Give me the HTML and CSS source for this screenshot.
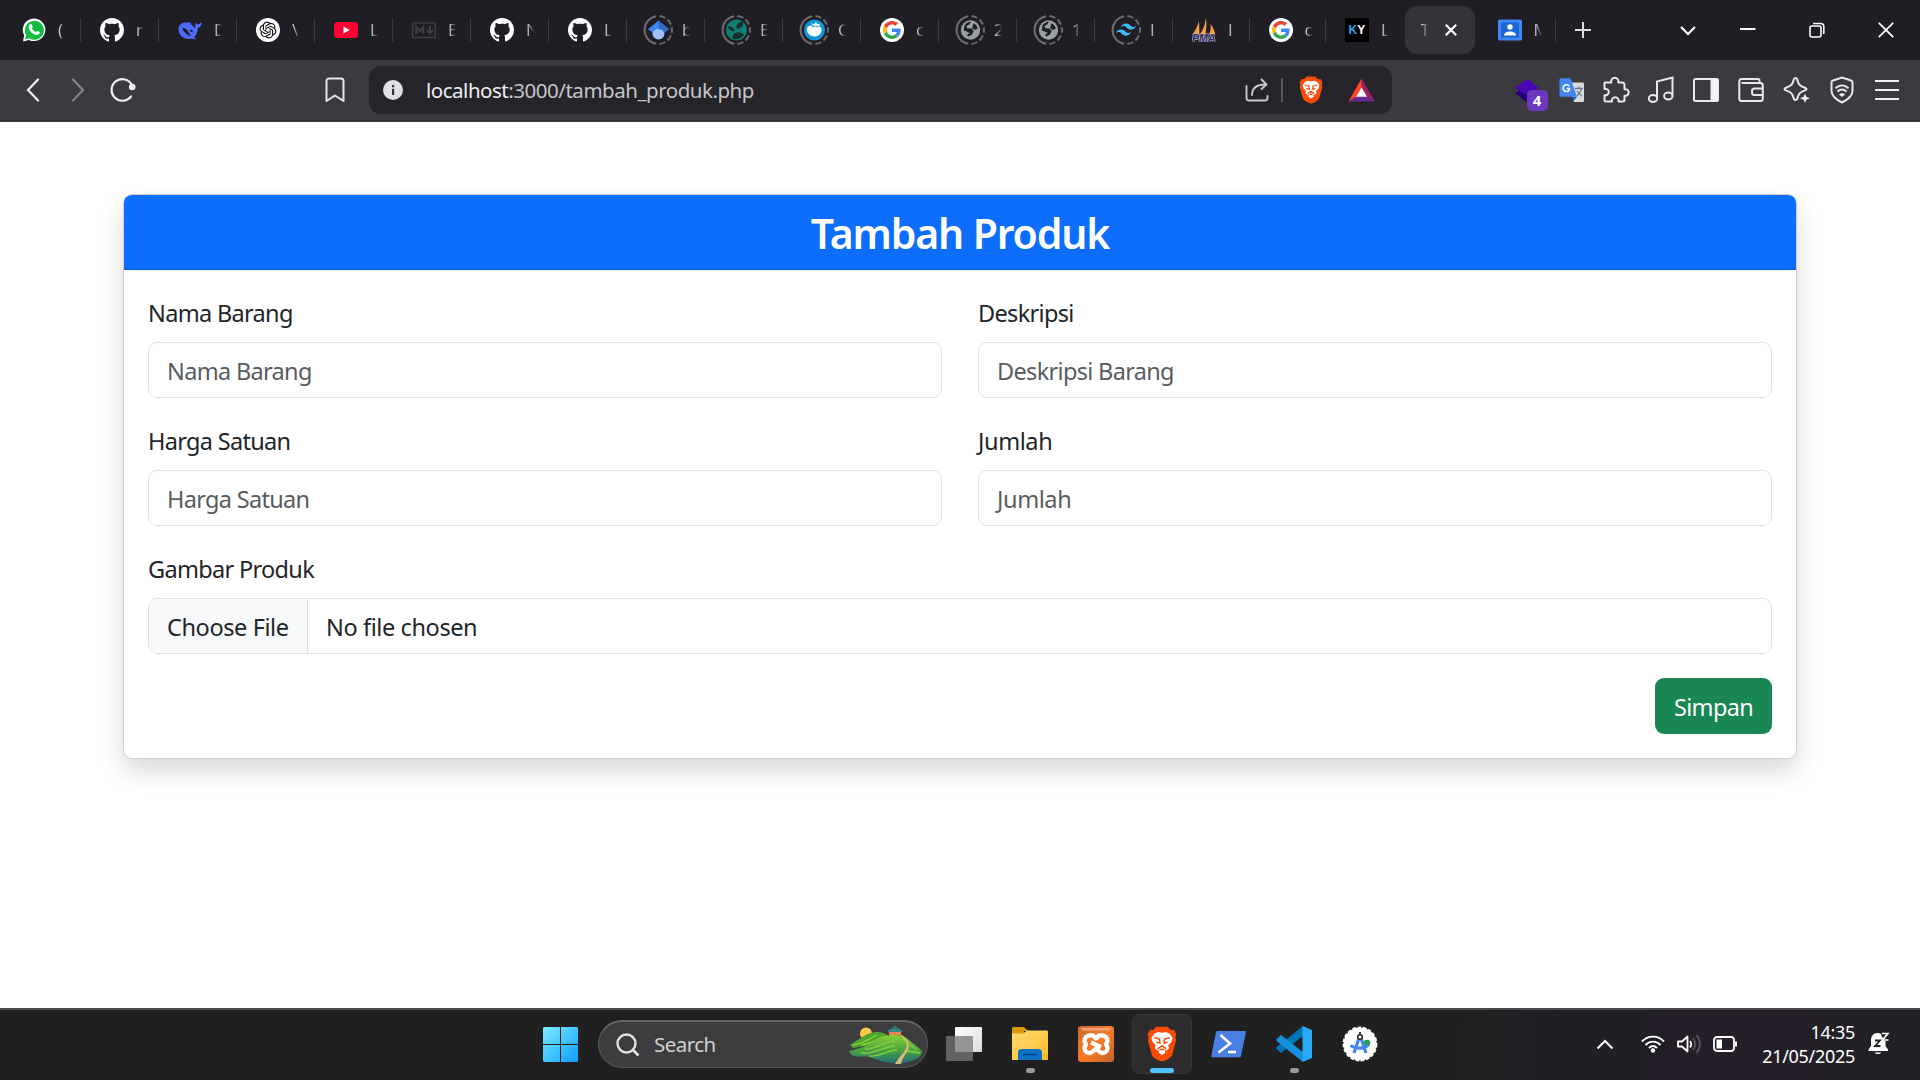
FILE: index.html
```html
<!DOCTYPE html>
<html lang="id">
<head>
<meta charset="utf-8">
<title>Tambah Produk</title>
<link rel="stylesheet" href="styles.css">
</head>
<body>
<svg class="defs" width="0" height="0" aria-hidden="true">
  <defs>
    <symbol id="github" viewBox="0 0 16 16"><path fill="#fff" d="M8 0C3.58 0 0 3.58 0 8c0 3.54 2.29 6.53 5.47 7.59.4.07.55-.17.55-.38 0-.19-.01-.82-.01-1.49-2.01.37-2.53-.49-2.69-.94-.09-.23-.48-.94-.82-1.13-.28-.15-.68-.52-.01-.53.63-.01 1.08.58 1.23.82.72 1.21 1.87.87 2.33.66.07-.52.28-.87.51-1.07-1.78-.2-3.64-.89-3.64-3.95 0-.87.31-1.59.82-2.15-.08-.2-.36-1.02.08-2.12 0 0 .67-.21 2.2.82.64-.18 1.32-.27 2-.27s1.36.09 2 .27c1.53-1.04 2.2-.82 2.2-.82.44 1.1.16 1.92.08 2.12.51.56.82 1.27.82 2.15 0 3.07-1.87 3.75-3.65 3.95.29.25.54.73.54 1.48 0 1.07-.01 1.93-.01 2.2 0 .21.15.46.55.38A8.01 8.01 0 0 0 16 8c0-4.42-3.58-8-8-8"/></symbol>
    <symbol id="google" viewBox="0 0 24 24"><circle cx="12" cy="12" r="12" fill="#fff"/><g transform="translate(3 3) scale(.375)"><path fill="#EA4335" d="M24 9.5c3.54 0 6.71 1.22 9.21 3.6l6.85-6.85C35.9 2.38 30.47 0 24 0 14.62 0 6.51 5.38 2.56 13.22l7.98 6.19C12.43 13.72 17.74 9.5 24 9.5z"/><path fill="#4285F4" d="M46.98 24.55c0-1.57-.15-3.09-.38-4.55H24v9.02h12.94c-.58 2.96-2.26 5.48-4.78 7.18l7.73 6c4.51-4.18 7.09-10.36 7.09-17.65z"/><path fill="#FBBC05" d="M10.53 28.59c-.48-1.45-.76-2.99-.76-4.59s.27-3.14.76-4.59l-7.98-6.19C.92 16.46 0 20.12 0 24c0 3.88.92 7.54 2.56 10.78l7.97-6.19z"/><path fill="#34A853" d="M24 48c6.48 0 11.93-2.13 15.89-5.81l-7.73-6c-2.15 1.45-4.92 2.3-8.16 2.3-6.26 0-11.57-4.22-13.47-9.91l-7.98 6.19C6.51 42.62 14.62 48 24 48z"/></g></symbol>
    <symbol id="ring" viewBox="0 0 30 30"><g fill="none" stroke="#6b6b70" stroke-width="2"><path d="M13.2 1.2A14 14 0 0 0 13.2 28.8"/><path d="M16.5 1.1A14 14 0 0 1 22.3 3"/><path d="M24.4 4.6A14 14 0 0 1 27.9 9.6"/><path d="M28.7 12.2A14 14 0 0 1 28.7 17.8"/><path d="M27.9 20.4A14 14 0 0 1 24.4 25.4"/><path d="M22.3 27A14 14 0 0 1 16.5 28.9"/></g></symbol>
    <symbol id="globe" viewBox="0 0 30 30"><use href="#ring"/><circle cx="15.5" cy="15" r="9.7" fill="#9aa0a6"/><path d="M9.500 10.500c1.500-2.500 4-4 6.500-3.800l-1.500 2.500-3 1.800.5 2.200 4.500.3 2.200 2.500-1.700 3.500-3.500 2-1.800-1.200 3-2.300-3.500-1.800-2.500-.7zM18.500 8.200c2.500 1 3.800 3 4.200 5.300l-2.500 1.500-3-1.500.5-2.500z" fill="#1f1e24"/></symbol>
    <symbol id="brave" viewBox="0 0 24 28"><path fill="#fb4b08" d="M7.500.500h9L19 3.200l2.500-.2 2 3.500-.8 2.200.6 2.300-3.200 11.500c-.8 2.200-5 4.200-8.100 5-3.100-.8-7.300-2.800-8.100-5L.7 11l.6-2.300L.5 6.500 2.500 3l2.500.2z"/><path fill="#fff" d="M12 5.200l3.200-.5 3 1.300 2.300 3.300-1 3.200-2.600 2.600.8 2.200-2.400 2-1.300-1.200.8 2.500L12 22.500l-2.800-1.900.8-2.500-1.300 1.200-2.400-2 .8-2.200-2.600-2.600-1-3.200L5.800 6l3-1.300z"/><path d="M5.800 9l4.200 1.200.4 3-2.900-.6M18.200 9L14 10.200l-.4 3 2.900-.6M8.600 17.700L12 15.300l3.400 2.400M10.300 18.300h3.400" fill="none" stroke="#fb4b08" stroke-width="1.200"/></symbol>
    <linearGradient id="win" x1="0" y1="0" x2="1" y2="1"><stop offset="0" stop-color="#7cecff"/><stop offset="1" stop-color="#0c9dff"/></linearGradient>
    <linearGradient id="folder" x1="0" y1="0" x2="1" y2="1"><stop offset="0" stop-color="#ffda72"/><stop offset="1" stop-color="#fdbd2c"/></linearGradient>
    <linearGradient id="hill" x1="0" y1="0" x2="0" y2="1"><stop offset="0" stop-color="#8bd038"/><stop offset=".55" stop-color="#48a23f"/><stop offset="1" stop-color="#23707a"/></linearGradient>
    <linearGradient id="sheet" x1="0" y1="0" x2="1" y2="1"><stop offset="0" stop-color="#fff"/><stop offset="1" stop-color="#dcdcdc"/></linearGradient>
    <linearGradient id="xampp" x1="0" y1="0" x2="1" y2="1"><stop offset="0" stop-color="#c86a2c"/><stop offset=".5" stop-color="#fb7a24"/><stop offset="1" stop-color="#c0652d"/></linearGradient>
  </defs>
</svg>

<header class="tabs">
  <div class="tab"><svg class="fav" viewBox="0 0 24 24"><path d="M1 23.500l1.200-6.200A11.300 11.300 0 1 1 7 21.900z" fill="#fff"/><path d="M3 21.500l1.200-4.400A9.500 9.500 0 1 1 7.300 20.300z" fill="#0fbd41"/><path d="M8.300 6.200c.6-.4 1.200-.1 1.500.5l.9 2c.2.500-.8 1.500-.7 1.900.7 1.600 2 2.700 3.600 3.400.5.100 1.300-1.300 1.800-1.100l2.300 1.200c.5 1.600-1.300 2.900-2.800 2.800-3.900-.3-8-4.200-8.200-7.500-.1-1.300.7-2.500 1.600-3.200z" fill="#fff"/></svg><span class="name">(</span></div>
  <div class="tab"><svg class="fav"><use href="#github"/></svg><span class="name">r</span></div>
  <div class="tab"><svg class="fav" viewBox="0 0 24 24"><path fill="#4d6bfe" d="M.5 10.500C1 6.500 4.500 4 8.500 4.700c1.500.1 2.500-.7 3.600-.3.800.4.300 1.200 1 2 1.500 1.200 3.200 3 3.700 3.600 1-.6.200-2.800.6-5.500.7 1.300 1.500 1.900 2.700 1.800 1.300-.1 2-1.500 3.700-1.700-.2 3.200-1.700 5-4 5.500-.1 4-1.500 7.200-3.700 9.100 1 .7 2 .8 1.700 1.500-.8.8-2.600.4-3.700-.3C8 22.500.2 18.500.5 10.500zM4.500 10c-.5 2 4.800 8 8.500 8.200-.8-1.400-2.300-3.700-3-5-1-2-3.200-3.600-5.500-3.200zM12.300 11.500c-.6 1.200 1 3 2.500 2.700.5-1.200-1.300-3-2.500-2.700z"/></svg><span class="name">D</span></div>
  <div class="tab"><svg class="fav" viewBox="0 0 24 24"><circle cx="12" cy="12" r="12" fill="#fff"/><g transform="translate(3.600 3.600) scale(.7)"><path fill="#111" d="M22.2819 9.8211a5.9847 5.9847 0 0 0-.5157-4.9108 6.0462 6.0462 0 0 0-6.5098-2.9A6.0651 6.0651 0 0 0 4.9807 4.1818a5.9847 5.9847 0 0 0-3.9977 2.9 6.0462 6.0462 0 0 0 .7427 7.0966 5.98 5.98 0 0 0 .511 4.9107 6.051 6.051 0 0 0 6.5146 2.9001A5.9847 5.9847 0 0 0 13.2599 24a6.0557 6.0557 0 0 0 5.7718-4.2058 5.9894 5.9894 0 0 0 3.9977-2.9001 6.0557 6.0557 0 0 0-.7475-7.0729zm-9.022 12.6081a4.4755 4.4755 0 0 1-2.8764-1.0408l.1419-.0804 4.7783-2.7582a.7948.7948 0 0 0 .3927-.6813v-6.7369l2.02 1.1686a.071.071 0 0 1 .038.052v5.5826a4.504 4.504 0 0 1-4.4945 4.4944zm-9.6607-4.1254a4.4708 4.4708 0 0 1-.5346-3.0137l.142.0852 4.783 2.7582a.7712.7712 0 0 0 .7806 0l5.8428-3.3685v2.3324a.0804.0804 0 0 1-.0332.0615L9.74 19.9502a4.4992 4.4992 0 0 1-6.1408-1.6464zM2.3408 7.8956a4.485 4.485 0 0 1 2.3655-1.9728V11.6a.7664.7664 0 0 0 .3879.6765l5.8144 3.3543-2.0201 1.1685a.0757.0757 0 0 1-.071 0l-4.8303-2.7865A4.504 4.504 0 0 1 2.3408 7.872zm16.5963 3.8558L13.1038 8.364 15.1192 7.2a.0757.0757 0 0 1 .071 0l4.8303 2.7913a4.4944 4.4944 0 0 1-.6765 8.1042v-5.6772a.79.79 0 0 0-.407-.667zm2.0107-3.0231l-.142-.0852-4.7735-2.7818a.7759.7759 0 0 0-.7854 0L9.409 9.2297V6.8974a.0662.0662 0 0 1 .0284-.0615l4.8303-2.7866a4.4992 4.4992 0 0 1 6.6802 4.66zM8.3065 12.863l-2.02-1.1638a.0804.0804 0 0 1-.038-.0567V6.0742a4.4992 4.4992 0 0 1 7.3757-3.4537l-.142.0805L8.704 5.459a.7948.7948 0 0 0-.3927.6813zm1.0976-2.3654l2.602-1.4998 2.6069 1.4998v2.9994l-2.5974 1.4997-2.6067-1.4997Z"/></g></svg><span class="name">\</span></div>
  <div class="tab"><svg class="fav" viewBox="0 0 24 24"><rect y="4" width="24" height="16" rx="3.500" fill="#ff0033"/><path d="M9.500 8.500v7l6.200-3.500z" fill="#fff"/></svg><span class="name">L</span></div>
  <div class="tab"><svg class="fav" viewBox="0 0 24 24"><g fill="none" stroke="#3f3f43"><rect x=".7" y="5" width="22.600" height="14.500" stroke-width="1.400"/><path d="M4.200 16V9l3.500 4 3.500-4v7" stroke-width="2"/><path d="M18 8v7m-3-3l3 3.500 3-3.500" stroke-width="2"/></g></svg><span class="name">E</span></div>
  <div class="tab"><svg class="fav"><use href="#github"/></svg><span class="name">N</span></div>
  <div class="tab"><svg class="fav"><use href="#github"/></svg><span class="name">L</span></div>
  <div class="tab"><svg class="fav ringed" viewBox="0 0 30 30"><use href="#ring"/><circle cx="15.500" cy="18.500" r="6" fill="#a0c3ff"/><path d="M15.500 5.500L5 14.200l4.800 3.500c1-2.400 3-3.700 5.700-3.700s4.700 1.300 5.700 3.700l4.800-3.500z" fill="#4285f4"/><path d="M15.500 5.500V14c2.700 0 4.700 1.300 5.700 3.700l4.800-3.500z" fill="#356ac3"/></svg><span class="name">b</span></div>
  <div class="tab"><svg class="fav ringed" viewBox="0 0 30 30"><use href="#ring"/><circle cx="15.500" cy="15" r="10.500" fill="#0a8172"/><path d="M7 11.500c3.500-.5 6 1 7 4.500-3.500.8-6.500-.8-7-4.500zM15.500 13.500c-.5-4 2-6.800 6.500-7 .8 4.200-2 7.500-6.500 7zM12 24c-1.500-3.500 1-6.500 4.500-6.800 3-.2 5 .8 6.500 2.800-3 3.500-7 5-11 4z" fill="#1f2a2b"/></svg><span class="name">E</span></div>
  <div class="tab"><svg class="fav ringed" viewBox="0 0 30 30"><use href="#ring"/><circle cx="15.500" cy="15" r="10.500" fill="#0c96dc"/><path d="M8.500 12c1.500-1.500 4-1.500 6-.7L12 8.500l3.500.5 1.500-2.500 1 2.500 3.500-.3-2 2.500c2 0 3 1.500 3 3.800 0 4-3 6.500-7 6.500s-7.500-3-7.500-6.500c0-1.200 0-2 .5-3z" fill="#fff"/><path d="M13 12l3.500-1 3 1" stroke="#0c96dc" fill="none"/></svg><span class="name">C</span></div>
  <div class="tab"><svg class="fav"><use href="#google"/></svg><span class="name">c</span></div>
  <div class="tab"><svg class="fav ringed"><use href="#globe"/></svg><span class="name">2</span></div>
  <div class="tab"><svg class="fav ringed"><use href="#globe"/></svg><span class="name">1</span></div>
  <div class="tab"><svg class="fav ringed" viewBox="0 0 30 30"><use href="#ring"/><g transform="translate(5 4.500) scale(.84)"><path fill="#38bdf8" d="M12.001 4.800c-3.200 0-5.200 1.600-6 4.800 1.200-1.600 2.600-2.200 4.200-1.800.913.228 1.565.89 2.288 1.624C13.666 10.618 15.027 12 18.001 12c3.200 0 5.200-1.600 6-4.800-1.200 1.600-2.600 2.200-4.200 1.800-.913-.228-1.565-.89-2.288-1.624C16.337 6.182 14.976 4.800 12.001 4.800zm-6 7.200c-3.200 0-5.200 1.600-6 4.800 1.200-1.600 2.600-2.200 4.200-1.800.913.228 1.565.89 2.288 1.624 1.177 1.194 2.538 2.576 5.512 2.576 3.200 0 5.200-1.600 6-4.800-1.200 1.600-2.600 2.200-4.200 1.800-.913-.228-1.565-.89-2.288-1.624C10.337 13.382 8.976 12 6.001 12z"/></g></svg><span class="name">I</span></div>
  <div class="tab slim"><svg class="fav" viewBox="0 0 24 24"><path d="M7 3l.5 13.500H.5C3.500 12 5.800 8 7 3zM14 0c1 6 0 11-.5 16.500H8C11.500 11 13.200 6 14 0zM18.500 6c2.500 3 4 6.500 4.700 10.500H17c1.700-3.500 2-7 1.500-10.500z" fill="#f9a040"/><text x="0" y="23.500" class="pma">PMA</text></svg><span class="name">I</span></div>
  <div class="tab slim"><svg class="fav"><use href="#google"/></svg><span class="name">c</span></div>
  <div class="tab slim last"><svg class="fav" viewBox="0 0 24 24"><path d="M0 0h24v24H0z"/><text x="3.500" y="16" class="ky"><tspan fill="#2ba4e8">K</tspan><tspan fill="#fff">Y</tspan></text></svg><span class="name">L</span></div>
  <div class="tab active"><span class="name">T</span><svg width="12" height="12" viewBox="0 0 12 12"><path d="M.8.8l10.400 10.400M11.200.8L.8 11.200" stroke="#fff" stroke-width="2.200"/></svg></div>
  <div class="tab contacts"><svg class="fav" viewBox="0 0 24 24"><rect y="1.500" width="24" height="21" rx="1.500" fill="#4285f4"/><path d="M3 4.500h18v15H3z" fill="#1967d2"/><circle cx="12" cy="9" r="2.700" fill="#fff"/><path d="M6 17.500c0-5.500 12-5.500 12 0z" fill="#fff"/></svg><span class="name">M</span></div>
  <svg class="plus" width="16" height="16" viewBox="0 0 16 16"><path d="M8 0v16M0 8h16" stroke="#dcdcde" stroke-width="2"/></svg>
  <div class="window">
    <svg width="16" height="16" viewBox="0 0 16 16"><path d="M1 5l7 7 7-7" fill="none" stroke="#fff" stroke-width="2"/></svg>
    <svg width="16" height="16" viewBox="0 0 16 16"><path d="M0 7h15.500" stroke="#fff" stroke-width="2"/></svg>
    <svg width="16" height="16" viewBox="0 0 16 16"><g fill="none" stroke="#fff" stroke-width="1.600"><rect x="1" y="4" width="11" height="11" rx="2"/><path d="M4 1.500h7.500a3.300 3.300 0 0 1 3.300 3.300V12"/></g></svg>
    <svg width="16" height="16" viewBox="0 0 16 16"><path d="M.8.8l14.400 14.400M15.200.8L.8 15.200" stroke="#fff" stroke-width="1.800"/></svg>
  </div>
</header>

<nav class="toolbar">
  <div class="nav">
    <svg width="14" height="24" viewBox="0 0 14 24"><path d="M12 1.500L2 12l10 10.500" fill="none" stroke="#f0f0f2" stroke-width="2.200" stroke-linecap="round"/></svg>
    <svg width="14" height="24" viewBox="0 0 14 24"><path d="M2 1.500L12 12 2 22.500" fill="none" stroke="#85858a" stroke-width="2.200" stroke-linecap="round"/></svg>
    <svg width="26" height="26" viewBox="0 0 26 26"><path d="M22 8A10.800 10.800 0 1 0 21 19.500" fill="none" stroke="#f0f0f2" stroke-width="2.200" stroke-linecap="round"/><circle cx="22.200" cy="10" r="3.300" fill="#f0f0f2"/></svg>
  </div>
  <svg class="bookmark" width="20" height="26" viewBox="0 0 20 26"><path d="M1.500 4a2.500 2.500 0 0 1 2.500-2.500h12A2.500 2.500 0 0 1 18.500 4v20L10 18.500 1.500 24z" fill="none" stroke="#e8e8ea" stroke-width="2" stroke-linejoin="round"/></svg>
  <div class="address">
    <svg width="20" height="20" viewBox="0 0 20 20"><circle cx="10" cy="10" r="10" fill="#e1e0e6"/><path d="M9 5h2.200v2.200H9zM9 8.700h2.200V15H9z" fill="#333238"/></svg>
    <span class="url"><b>localhost</b>:3000/tambah_produk.php</span>
    <svg class="share" width="24" height="24" viewBox="0 0 24 24"><path d="M1.500 8v12a2.500 2.500 0 0 0 2.500 2.500h16a2.500 2.500 0 0 0 2.500-2.500v-2M7 17C7 10.500 11.500 6.500 21 6.500M16.500 1.500l5 5-5 4.500" fill="none" stroke="#c9c8ce" stroke-width="1.900" stroke-linecap="round" stroke-linejoin="round"/></svg>
    <i class="rule"></i>
    <svg class="lion" width="24" height="28"><use href="#brave"/></svg>
    <svg width="28" height="24" viewBox="0 0 28 24"><path d="M13.500.500L.5 23.500l8.500-5 5-9z" fill="#ff4724"/><path d="M13.500.500l13.500 23-8.500-5-5-9z" fill="#9e1f63"/><path d="M.5 23.500h26.500l-8-5H8.500z" fill="#662d91"/><path d="M13.600 9.500l5.500 9.200h-11z" fill="#fff"/></svg>
  </div>
  <div class="extensions">
    <div class="ext"><svg width="26" height="24" viewBox="0 0 26 24"><path d="M1 15l12-7 12 7-13 9z" fill="#21007a"/><path d="M1 10L13 1l12 9-12 7z" fill="#4b06b5"/></svg><span class="badge">4</span></div>
    <svg width="26" height="24" viewBox="0 0 26 24"><path d="M11 4.500h13a1 1 0 0 1 1 1V23a1 1 0 0 1-1 1H15z" fill="#dadada"/><path d="M2 .300h9.500l6.500 18.500H2A1.500 1.500 0 0 1 .5 17.500v-16A1.500 1.500 0 0 1 2 .300z" fill="#4285f4"/><path d="M13 19h5l-4.500 5z" fill="#2456b8"/><path d="M10.200 8A3.400 3.400 0 1 0 10.300 12c.3-.6.300-1 .3-1.600H7.500" fill="none" stroke="#fff" stroke-width="1.500"/><path d="M16 10.500h8M20 8.500v2m2.700 0c-.7 3-2.500 5.500-5 7.500m.3-5c1 2 2.500 3.700 5 5" fill="none" stroke="#697f8b" stroke-width="1.300"/></svg>
    <svg width="28" height="28" viewBox="0 0 28 28"><path d="M3 6.500h6.300c-.8-2.300 1-4.800 3.500-4.800s4.300 2.500 3.500 4.800H20a2.500 2.500 0 0 1 2.500 2.500v4.300c2-.6 4.200.9 4.200 3.200s-2.200 3.800-4.200 3.200V24a1.500 1.500 0 0 1-1.500 1.500h-4.500c.6-2.300-1-4.300-3.200-4.300S9.500 23.200 10 25.500H4A1.500 1.500 0 0 1 2.500 24v-4.800c2.200.5 4.300-.9 4.300-3.200S4.700 12.500 2.500 13V7z" fill="none" stroke="#e8e8ea" stroke-width="2" stroke-linejoin="round"/></svg>
    <svg width="28" height="28" viewBox="0 0 28 28"><path d="M10 22.500V5.500l15.500-4v18" fill="none" stroke="#e8e8ea" stroke-width="2"/><ellipse cx="6" cy="22.500" rx="4.200" ry="3.400" fill="none" stroke="#e8e8ea" stroke-width="2"/><ellipse cx="21.300" cy="20" rx="4.200" ry="3.400" fill="none" stroke="#e8e8ea" stroke-width="2"/></svg>
    <svg width="28" height="28" viewBox="0 0 28 28"><rect x="2" y="3" width="24" height="22" rx="1.500" fill="none" stroke="#e8e8ea" stroke-width="2"/><path d="M18.500 2.500H26v23h-7.500z" fill="#f4f4f5"/></svg>
    <svg width="28" height="28" viewBox="0 0 28 28"><path d="M22.500 7V4.500a1.500 1.500 0 0 0-1.500-1.500H4.500a2.200 2.200 0 0 0-2.200 2.500v17a2.500 2.500 0 0 0 2.500 2.500h18.500a2.500 2.500 0 0 0 2.500-2.500V9.500A2.500 2.500 0 0 0 23.300 7H4.500M26 12.500h-8.500a2.500 2.500 0 0 0-2.500 2.500v1.500a2.500 2.500 0 0 0 2.500 2.500H26" fill="none" stroke="#e8e8ea" stroke-width="2"/></svg>
    <svg width="28" height="28" viewBox="0 0 28 28"><path d="M12.500 2c1 0 1.500.6 1.800 1.500 1 4.500 2 6.500 7.700 8.200 2 .6 2 2.100 0 2.700-5.200 1.500-6.600 3.500-7.700 8.200-.5 2-3 2-3.500 0-1.200-4.700-2.500-6.700-7.800-8.200-2-.6-2-2.100 0-2.700 5.600-1.700 6.700-3.700 7.800-8.200.3-.9.700-1.500 1.700-1.500z" fill="none" stroke="#e8e8ea" stroke-width="2"/><path d="M22 17.500l1.300 3.200 3.700 1.500-3.700 1.500-1.300 3.300-1.300-3.300-3.700-1.500 3.700-1.500z" fill="#f4f4f5"/></svg>
    <svg width="28" height="28" viewBox="0 0 28 28"><path d="M14 1.500l9 3a2 2 0 0 1 1.500 2V15c0 5-5.500 9-10.500 11.500C9 24 3.500 20 3.500 15V6.500a2 2 0 0 1 1.500-2zM7.500 12.200c4-3.600 9-3.600 13 0M9.500 15.500c2.800-2.500 6.200-2.500 9 0" fill="none" stroke="#e8e8ea" stroke-width="2"/><path d="M11 18.500c2-1.600 4-1.600 6 0l-3 2.500z" fill="#f4f4f5"/></svg>
    <svg width="28" height="28" viewBox="0 0 28 28"><path d="M2 5h24M2 14h24M2 23h24" stroke="#f0f0f2" stroke-width="2"/></svg>
  </div>
</nav>

<main class="page">
  <section class="card">
    <h3 class="card-header">Tambah Produk</h3>
    <form class="card-body">
      <div class="row">
        <div class="field"><label>Nama Barang</label><div class="input"><span>Nama Barang</span></div></div>
        <div class="field"><label>Deskripsi</label><div class="input"><span>Deskripsi Barang</span></div></div>
      </div>
      <div class="row">
        <div class="field"><label>Harga Satuan</label><div class="input"><span>Harga Satuan</span></div></div>
        <div class="field"><label class="wide">Jumlah</label><div class="input wide"><span>Jumlah</span></div></div>
      </div>
      <div class="field"><label>Gambar Produk</label><div class="input file wide"><span class="choose">Choose File</span><span class="chosen">No file chosen</span></div></div>
      <button type="button" class="save">Simpan</button>
    </form>
  </section>
</main>

<footer class="taskbar">
  <div class="dock">
    <svg class="start" width="35" height="35" viewBox="0 0 35 35"><path d="M1 0h16v17H0V1zM18 0h16l1 1v16H18zM0 18h17v17H1l-1-1zM18 18h17v16l-1 1H18z" fill="url(#win)"/></svg>
    <div class="search">
      <svg width="24" height="24" viewBox="0 0 24 24"><circle cx="10.500" cy="10.500" r="9" fill="none" stroke="#e2e2e4" stroke-width="2.400"/><path d="M17 17l5.500 5.500" stroke="#e2e2e4" stroke-width="2.600"/></svg>
      <span>Search</span>
      <svg class="scene" width="73" height="38" viewBox="0 0 73 38"><circle cx="17" cy="7.500" r="6" fill="#fdc84b"/><path d="M1 19c8-5 17-13 27-13s14 6 14 9L4 22z" fill="#4da62f"/><path d="M4 19c9-1 14-5 24-10M12 19c9-1 14-4 22-8" stroke="#8fd23c" stroke-width="1.300" fill="none"/><path d="M0 25c10-2 17-5 25-10 5-4 11-6 21-6 11 0 13 5 19 9 5 4 9 7 8 9-2 5-9 8-18 10-16 1-24-2-34-6C12 29 4 34 0 25z" fill="url(#hill)"/><path d="M16 23c10 1 18-7 30-8M12 27c14 2 22-7 34-7M20 30c12 1 18-6 28-6M60 18l8 6M58 25l13 2" stroke="#86cf3e" stroke-width="1.300" fill="none"/><path d="M51 9c7 6 9 11 4 17-4 5-6 7-9 12h6c1-5 3-8 6-12 4-7 1-12-5-17z" fill="#d9bd78"/><path d="M40 6h12v3H40z" fill="#ed8352"/><path d="M38 6l3-3h10l3 3zM42 2.500L46 0l4 2.500z" fill="#37858d"/></svg>
    </div>
    <div class="app"><svg width="36" height="34" viewBox="0 0 36 34"><rect x="9" width="27" height="25" rx="1" fill="url(#sheet)"/><rect y="9" width="27" height="25" rx="1" fill="#777" fill-opacity=".75"/></svg></div>
    <div class="app running"><svg width="36" height="34" viewBox="0 0 36 34"><path d="M0 1.500A1.500 1.500 0 0 1 1.500 0H12l4 4h-4v5H0z" fill="#dc9b06"/><path d="M0 6.500h11l4-3h20l1 1V33H0z" fill="url(#folder)"/><path d="M6 33v-7a4 4 0 0 1 4-4h16a4 4 0 0 1 4 4v7z" fill="#0b70c6"/><path d="M11 27.500h14" stroke="#07447f" stroke-width="1.500"/></svg></div>
    <div class="app"><svg width="36" height="36" viewBox="0 0 36 36"><rect width="36" height="36" rx="3" fill="url(#xampp)"/><path d="M3 2h30l-2 2.500H5z" fill="#efa477"/><path d="M12 9.500h3c1.500 0 1.500 3 3 3s1.500-3 3-3h3c3 0 5.500 2.500 5.500 5.500 0 2-1.500 2.500-1.500 3.500s1.500 1.500 1.500 3.500c0 3-2.500 5-5.500 5-3.500 0-3.500-4-6-4s-2.500 4-6 4c-3 0-5.500-2-5.500-5 0-2 1.500-2.500 1.500-3.500S6.500 17 6.500 15c0-3 2.500-5.500 5.500-5.500zM13 16.500l10 4.500" fill="none" stroke="#fff" stroke-width="4.300" stroke-linejoin="round"/></svg></div>
    <div class="app current"><svg width="30" height="36" viewBox="0 0 24 28" preserveAspectRatio="none"><use href="#brave" width="24" height="28"/></svg></div>
    <div class="app"><svg width="35" height="28" viewBox="0 0 35 28"><path d="M6 1h28a1 1 0 0 1 1 1l-5 24a1.500 1.500 0 0 1-1.500 1.200H1.200A1 1 0 0 1 .3 26L5 2z" fill="#4a80e4"/><path d="M9.500 5l9.500 8.500L7.500 22.500M17 22h8" fill="none" stroke="#fff" stroke-width="2.600"/></svg></div>
    <div class="app running"><svg width="36" height="36" viewBox="0 0 36 36"><path d="M27 0v10L5 27l-4.500-4v-2z" fill="#0073b7"/><path d="M27 36V26L5 9 .500 13v2z" fill="#1590dc"/><path d="M26.500 0L36 4v28l-9.500 4z" fill="#29a9f3"/></svg></div>
    <div class="app"><svg width="36" height="36" viewBox="0 0 36 36"><circle cx="18" cy="18" r="16.500" fill="#fff"/><circle cx="18" cy="18" r="16.200" fill="none" stroke="#fff" stroke-width="2.500" stroke-dasharray="3.500 1.750"/><circle cx="25" cy="17" r="3.300" fill="#259c49"/><path d="M17 12l-5 15M19 12l5 15M8.500 19.500c5 3.500 13 3.500 18-.5" fill="none" stroke="#4386f5" stroke-width="3.200"/><circle cx="18" cy="11" r="2.300" fill="#fff" stroke="#222" stroke-width="1.500"/><path d="M18 6v3" stroke="#333" stroke-width="2"/></svg></div>
  </div>
  <div class="tray">
    <svg width="18" height="12" viewBox="0 0 18 12"><path d="M1.500 10.500L9 3l7.500 7.500" fill="none" stroke="#fff" stroke-width="2"/></svg>
    <svg class="wifi" width="24" height="18" viewBox="0 0 24 18"><path d="M1 6.500c6-6.500 16-6.500 22 0M4.500 10c4-4.500 11-4.500 15 0M8 13c2.500-2.500 5.500-2.500 8 0" fill="none" stroke="#fff" stroke-width="1.900"/><circle cx="12" cy="15.500" r="2.200" fill="#fff"/></svg>
    <svg class="volume" width="24" height="20" viewBox="0 0 24 20"><path d="M1 7.500v5h4l5.500 5V2.500L5 7.500zM13 7c1.500 2 1.500 4.500 0 6.500" fill="none" stroke="#fff" stroke-width="1.800" stroke-linejoin="round"/><path d="M16 4.500c3 3.500 3 7.500 0 11M19.500 1c4.500 5.500 4.500 12.500 0 18" fill="none" stroke="#5a5560" stroke-width="1.800"/></svg>
    <svg class="battery" width="24" height="16" viewBox="0 0 24 16"><rect x="1" y="1" width="20" height="14" rx="3" fill="none" stroke="#fff" stroke-width="1.800"/><path d="M3.500 3.500h5.500v9H3.500zM22 5.500h2v5h-2z" fill="#fff"/></svg>
    <div class="clock"><span>14:35</span><span>21/05/2025</span></div>
    <svg class="bell" width="22" height="24" viewBox="0 0 22 24"><path d="M10 1C5 1 3 4.500 3 8v6l-2.500 3.500V19H20v-1.500L17.500 14V8C17.500 4 14 1 10 1zM6.500 20.500a4 3 0 0 0 7 0z" fill="#fff"/><path d="M7 8.500h5l-5 5.500h5.500" fill="none" stroke="#222026" stroke-width="1.800"/><path d="M12 0h10v9h-6z" fill="#222026"/><path d="M14 1.500h6L14.500 8h6" fill="none" stroke="#fff" stroke-width="1.600"/></svg>
  </div>
</footer>
</body>
</html>
```
FILE: styles.css
```css
* { box-sizing: border-box; }
body {
  margin: 0;
  width: 1920px;
  height: 1080px;
  overflow: hidden;
  display: flex;
  flex-direction: column;
  font-family: "Noto Sans", "Open Sans", sans-serif;
  background: #fff;
}
svg { display: block; flex: none; }
.defs { position: absolute; }

/* Tab strip */
.tabs {
  height: 60px;
  flex: none;
  display: flex;
  align-items: center;
  padding-left: 3px;
  background: #1f1e24;
}
.tab {
  flex: none;
  width: 78px;
  height: 24px;
  display: flex;
  align-items: center;
  padding-left: 19px;
  border-right: 1px solid #3b3b40;
}
.fav { width: 24px; height: 24px; }
.fav.ringed { width: 30px; height: 30px; margin: 0 -3px; }
.name {
  width: 8px;
  margin-left: 12px;
  overflow: hidden;
  white-space: nowrap;
  font-family: "Open Sans", "Noto Sans", sans-serif;
  font-size: 17px;
  line-height: 24px;
  color: #c6c6c9;
  -webkit-mask-image: linear-gradient(90deg, #000 20%, transparent);
  mask-image: linear-gradient(90deg, #000 20%, transparent);
}
.tab.slim { width: 76.5px; }
.tab.last { border: 0; }
.tab.active {
  width: 70px;
  height: 48px;
  margin-left: 2px;
  padding-left: 16px;
  gap: 17px;
  border: 0;
  border-radius: 12px;
  background: #343338;
}
.active .name { width: 7px; margin-left: 0; }
.tab.contacts { width: 81px; padding-left: 23px; }
.plus { margin-left: 19px; }
.window { display: flex; gap: 53px; margin-left: 89px; }
.window svg:first-child { margin-right: -9px; }
.pma { font: italic 700 10.5px "Liberation Sans", sans-serif; fill: #29265e; stroke: #c5c4da; stroke-width: 1.2px; paint-order: stroke; }
.ky { font: 700 12px "Liberation Sans", sans-serif; }

/* Navigation bar */
.toolbar {
  height: 62px;
  flex: none;
  display: flex;
  align-items: center;
  padding-bottom: 2px;
  background: #3b3a3f;
  box-shadow: inset 0 -1px #3b3a3f, inset 0 -2px #2f2e33;
}
.nav { display: flex; align-items: center; gap: 31px; padding-left: 26px; }
.nav svg:last-child { margin-left: -6px; }
.bookmark { margin-left: 189px; }
.address {
  width: 1023px;
  height: 48px;
  margin-left: 24px;
  padding: 0 16px 0 14px;
  display: flex;
  align-items: center;
  border-radius: 12px;
  background: #252429;
}
.url { margin-left: 23px; font-size: 20.5px; letter-spacing: -.48px; color: #c5c4ca; white-space: nowrap; }
.url b { font-weight: 400; color: #eeedf2; }
.share { margin-left: auto; }
.rule { width: 2px; height: 24px; margin: 0 16px 0 12px; background: #58575d; }
.lion { margin-right: 25px; }
.extensions { display: flex; align-items: center; gap: 17.2px; margin-left: 121.5px; }
.ext { position: relative; width: 28px; }
.badge {
  position: absolute;
  left: 13px;
  top: 12px;
  width: 21px;
  height: 21px;
  border-radius: 5px;
  background: #6b38bf;
  color: #fff;
  font-size: 15px;
  font-weight: 700;
  line-height: 21px;
  text-align: center;
}

/* Product form */
.page { flex: 1; padding: 72px 123px 0; background: #fff; }
.card {
  height: 565px;
  border: 1px solid #d0d0d0;
  border-radius: 9px;
  background: #fff;
  box-shadow: 0 12px 24px rgba(0, 0, 0, .15);
}
.card-header {
  height: 75px;
  margin: 0;
  border-bottom: 1px solid #0b5bd3;
  border-radius: 8px 8px 0 0;
  background: #0d6efd;
  color: #fff;
  font-size: 41px;
  font-weight: 600;
  line-height: 76px;
  letter-spacing: -1.15px;
  text-align: center;
}
.card-body { display: flex; flex-direction: column; gap: 24px; padding: 24px; }
.row { display: grid; grid-template-columns: 1fr 1fr; gap: 36px; }
.field { display: flex; flex-direction: column; gap: 12px; }
.field label, .input, .save {
  font-size: 23.5px;
  line-height: 36px;
  letter-spacing: -.68px;
  color: #212529;
}
.field label { height: 36px; padding-top: 1px; }
.field .wide { letter-spacing: -.4px; }
.input {
  height: 56px;
  display: flex;
  align-items: center;
  padding: 2px 18px 0;
  border: 1px solid #dee2e6;
  border-radius: 9px;
}
.input span { color: #595c5f; }
.input.file { padding: 0; overflow: hidden; }
.input.file span { color: #212529; }
.choose {
  width: 159px;
  height: 54px;
  padding: 10px 0 0 18px;
  border-right: 1px solid #dee2e6;
  background: #f8f9fa;
}
.chosen { padding: 2px 0 0 18px; }
.save {
  align-self: flex-end;
  width: 117px;
  height: 56px;
  padding: 2px 0 0;
  border: 0;
  border-radius: 9px;
  background: #198754;
  color: #fff;
  font-family: inherit;
}

/* Taskbar */
.taskbar {
  height: 72px;
  flex: none;
  display: flex;
  align-items: center;
  padding: 0 0 2px 543px;
  border-top: 2px solid #49494b;
  background: linear-gradient(90deg, #202021 0 76%, #211e26 84%, #251e29 91%, #222126);
}
.dock { display: flex; align-items: center; }
.search {
  width: 330px;
  height: 48px;
  margin: 0 3px 0 20px;
  padding: 0 5px 0 17px;
  display: flex;
  align-items: center;
  border: 1px solid #59595b;
  border-top: 2px solid #656567;
  border-radius: 24px;
  background: #3d3d3f;
}
.search span { margin: -2px 0 0 14px; font-size: 20.5px; letter-spacing: -.55px; color: #d1d1d1; }
.scene { margin-left: auto; }
.app {
  position: relative;
  width: 60px;
  height: 60px;
  margin: 0 3px;
  display: flex;
  align-items: center;
  justify-content: center;
  border-radius: 7px;
}
.app.current { background: #2c2c2d; border: 1px solid #363637; }
.running::after, .current::after {
  content: "";
  position: absolute;
  left: 50%;
  bottom: 1px;
  width: 9px;
  height: 5px;
  margin-left: -4.5px;
  border-radius: 3px;
  background: #9a9a9a;
}
.current::after { width: 24px; margin-left: -12px; bottom: 0; background: #4cc2ff; }
.tray { display: flex; align-items: center; margin-left: 203px; }
.wifi { margin-left: 27px; }
.volume { margin-left: 12px; }
.battery { margin-left: 12px; }
.clock {
  width: 118px;
  display: flex;
  flex-direction: column;
  align-items: flex-end;
  color: #fff;
  font-size: 18px;
  line-height: 24px;
  letter-spacing: -.3px;
}
.bell { margin-left: 13px; }
```
